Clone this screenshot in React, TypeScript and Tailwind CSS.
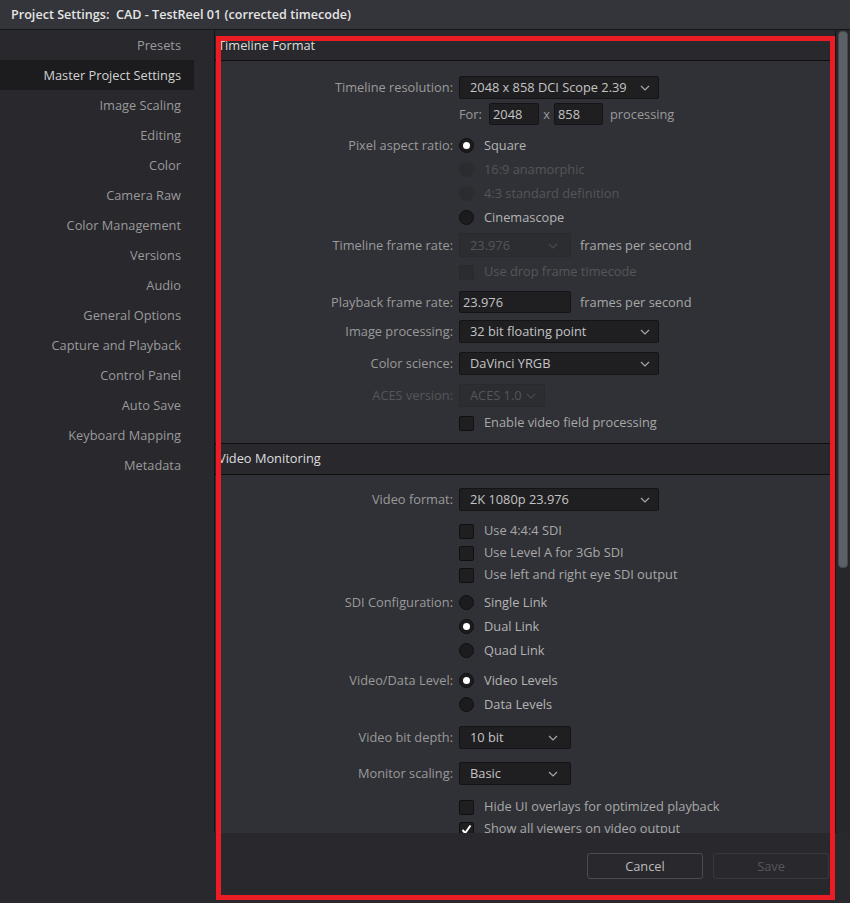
import React from 'react';

const sidebarItems = [
  'Presets',
  'Master Project Settings',
  'Image Scaling',
  'Editing',
  'Color',
  'Camera Raw',
  'Color Management',
  'Versions',
  'Audio',
  'General Options',
  'Capture and Playback',
  'Control Panel',
  'Auto Save',
  'Keyboard Mapping',
  'Metadata',
];

const Chevron: React.FC<{ dim?: boolean }> = ({ dim }) => (
  <svg width="10" height="6" viewBox="0 0 10 6" fill="none" className="shrink-0">
    <path d="M1 1L5 5L9 1" stroke={dim ? '#4a4a4e' : '#a8a8a8'} strokeWidth="1.2" />
  </svg>
);

const Row: React.FC<{ label?: string; dim?: boolean; className?: string; children?: React.ReactNode }> = ({
  label,
  dim,
  className = '',
  children,
}) => (
  <div className={`flex items-center ${className}`}>
    <div className={`w-[244px] shrink-0 pr-[6px] pt-[1px] text-right ${dim ? 'text-[#55555a]' : 'text-[#9a9a9a]'}`}>
      {label ? `${label}:` : ''}
    </div>
    <div className="flex items-center h-full">{children}</div>
  </div>
);

const Dropdown: React.FC<{ value: string; width: string; dim?: boolean; pad?: string }> = ({
  value,
  width,
  dim,
  pad = 'pl-[10px] pr-[8px]',
}) => (
  <div
    className={`${width} h-full flex items-center justify-between gap-[4px] whitespace-nowrap rounded-[2px] border pt-[1px] ${
      dim ? 'border-[#2a2a2e] bg-[#2c2d31] text-[#55555a]' : 'border-[#141416] bg-[#1f1f22] text-[#c4c4c4]'
    } ${pad}`}
  >
    <span>{value}</span>
    <Chevron dim={dim} />
  </div>
);

const Radio: React.FC<{ checked?: boolean; dim?: boolean; label: string }> = ({ checked, dim, label }) => (
  <div className="flex items-center gap-[10px]">
    <div
      className={`w-[15px] h-[15px] rounded-full border flex items-center justify-center ${
        dim ? 'bg-[#2b2c30] border-[#2b2c30]' : 'bg-[#1c1c1e] border-[#101011]'
      }`}
    >
      {checked && <div className="w-[7px] h-[7px] rounded-full bg-white" />}
    </div>
    <span className={`pt-[1px] ${dim ? 'text-[#55555a]' : 'text-[#b4b4b4]'}`}>{label}</span>
  </div>
);

const Check: React.FC<{ checked?: boolean; dim?: boolean; label: string }> = ({ checked, dim, label }) => (
  <div className="flex items-center gap-[10px]">
    <div
      className={`w-[15px] h-[15px] rounded-[2px] border flex items-center justify-center ${
        dim ? 'bg-[#2b2c30] border-[#2a2a2e]' : 'bg-[#1f1f22] border-[#101011]'
      }`}
    >
      {checked && (
        <svg width="11" height="11" viewBox="0 0 11 11" fill="none">
          <path d="M1.5 6L4.2 9L9.5 1.5" stroke="#ffffff" strokeWidth="2" />
        </svg>
      )}
    </div>
    <span className={dim ? 'text-[#55555a]' : 'text-[#a8a8a8]'}>{label}</span>
  </div>
);

const SectionHeader: React.FC<{ title: string; className?: string }> = ({ title, className = '' }) => (
  <div className={`flex items-center pl-[3px] bg-[#28282d] border-[#0f0f10] text-[#dedede] ${className}`}>
    {title}
  </div>
);

const Field: React.FC<{ value: string; width: string }> = ({ value, width }) => (
  <div
    className={`${width} h-full flex items-center pl-[3px] pt-[2px] rounded-[2px] border border-[#141416] bg-[#1f1f22] text-[#c4c4c4]`}
  >
    {value}
  </div>
);

export default function App() {
  return (
    <div
      className="relative w-[850px] h-[903px] flex flex-col bg-[#28282d] text-[12.8px] overflow-hidden"
      style={{ fontFamily: '"Open Sans", "Noto Sans", sans-serif' }}
    >
      {/* Title bar */}
      <div className="h-[30px] shrink-0 flex items-center pl-[11px] pt-[1px] bg-[#34353a] border-b border-[#161618] text-[#e4e4e4] text-[12.6px] font-semibold">
        Project Settings:&nbsp; CAD - TestReel 01 (corrected timecode)
      </div>

      <div className="flex flex-1 min-h-0">
        {/* Sidebar */}
        <div className="w-[214px] shrink-0 bg-[#28282d]">
          {sidebarItems.map((item, i) => (
            <div
              key={item}
              className={`w-[194px] h-[30px] flex items-center justify-end pr-[13px] pt-[2px] ${
                i === 1 ? 'bg-[#1c1c1e] text-[#d2d2d2]' : 'text-[#9a9a9a]'
              }`}
            >
              {item}
            </div>
          ))}
        </div>

        {/* Main */}
        <div className="flex-1 flex flex-col min-w-0">
          <div className="flex flex-1 min-h-0">
            <div className="w-[621px] shrink-0 overflow-hidden bg-[#303136] border-l border-[#141416]">
              <SectionHeader title="Timeline Format" className="h-[31px] pt-[2px] border-b" />
              <div className="flex flex-col pb-[9px]">
                <Row label="Timeline resolution" className="h-[23px] mt-[15px]">
                  <Dropdown value="2048 x 858 DCI Scope 2.39" width="w-[200px]" />
                </Row>
                <Row className="h-[22px] mt-[4px]">
                  <span className="text-[#9a9a9a] w-[30px] pt-[2px]">For:</span>
                  <Field value="2048" width="w-[50px]" />
                  <span className="text-[#9a9a9a] w-[15px] text-center pt-[2px]">x</span>
                  <Field value="858" width="w-[49px]" />
                  <span className="text-[#9a9a9a] ml-[7px] pt-[2px]">processing</span>
                </Row>
                <Row label="Pixel aspect ratio" className="h-[24px] mt-[8px]">
                  <Radio checked label="Square" />
                </Row>
                <Row className="h-[24px]">
                  <Radio dim label="16:9 anamorphic" />
                </Row>
                <Row className="h-[24px]">
                  <Radio dim label="4:3 standard definition" />
                </Row>
                <Row className="h-[24px]">
                  <Radio label="Cinemascope" />
                </Row>
                <Row label="Timeline frame rate" className="h-[24px] mt-[4px]">
                  <Dropdown value="23.976" width="w-[112px]" dim pad="pl-[10px] pr-[12px]" />
                  <span className="ml-[9px] pt-[1px] text-[#a8a8a8]">frames per second</span>
                </Row>
                <Row className="h-[22px] mt-[4px]">
                  <Check dim label="Use drop frame timecode" />
                </Row>
                <Row label="Playback frame rate" className="h-[22px] mt-[8px]">
                  <Field value="23.976" width="w-[112px]" />
                  <span className="ml-[9px] pt-[1px] text-[#a8a8a8]">frames per second</span>
                </Row>
                <Row label="Image processing" className="h-[23px] mt-[7px]">
                  <Dropdown value="32 bit floating point" width="w-[200px]" />
                </Row>
                <Row label="Color science" className="h-[23px] mt-[9px]">
                  <Dropdown value="DaVinci YRGB" width="w-[200px]" />
                </Row>
                <Row label="ACES version" dim className="h-[23px] mt-[9px]">
                  <Dropdown value="ACES 1.0" width="w-[86px]" dim pad="pl-[10px] pr-[12px]" />
                </Row>
                <Row className="h-[22px] mt-[5px]">
                  <Check label="Enable video field processing" />
                </Row>
              </div>

              <SectionHeader title="Video Monitoring" className="h-[32px] border-y" />
              <div className="flex flex-col">
                <Row label="Video format" className="h-[23px] mt-[13px]">
                  <Dropdown value="2K 1080p 23.976" width="w-[200px]" />
                </Row>
                <Row className="h-[22px] mt-[9px]">
                  <Check label="Use 4:4:4 SDI" />
                </Row>
                <Row className="h-[22px]">
                  <Check label="Use Level A for 3Gb SDI" />
                </Row>
                <Row className="h-[22px]">
                  <Check label="Use left and right eye SDI output" />
                </Row>
                <Row label="SDI Configuration" className="h-[24px] mt-[4px]">
                  <Radio label="Single Link" />
                </Row>
                <Row className="h-[24px]">
                  <Radio checked label="Dual Link" />
                </Row>
                <Row className="h-[24px]">
                  <Radio label="Quad Link" />
                </Row>
                <Row label="Video/Data Level" className="h-[24px] mt-[6px]">
                  <Radio checked label="Video Levels" />
                </Row>
                <Row className="h-[24px]">
                  <Radio label="Data Levels" />
                </Row>
                <Row label="Video bit depth" className="h-[23px] mt-[10px]">
                  <Dropdown value="10 bit" width="w-[112px]" pad="pl-[10px] pr-[12px]" />
                </Row>
                <Row label="Monitor scaling" className="h-[23px] mt-[13px]">
                  <Dropdown value="Basic" width="w-[112px]" pad="pl-[10px] pr-[12px]" />
                </Row>
                <Row className="h-[22px] mt-[11px]">
                  <Check label="Hide UI overlays for optimized playback" />
                </Row>
                <Row className="h-[22px]">
                  <Check checked label="Show all viewers on video output" />
                </Row>
              </div>
            </div>

            {/* Scrollbar */}
            <div className="flex-1 bg-[#27272b] border-l border-[#141416] pl-[2px] pt-[1px]">
              <div className="w-[10px] h-[537px] rounded-[4px] bg-[#5c6067] border border-[#45484e]" />
            </div>
          </div>

          {/* Footer */}
          <div className="h-[70px] shrink-0 bg-[#28282d] flex justify-end gap-[10px] pt-[20px] pr-[21px]">
            <div className="w-[116px] h-[26px] pt-[2px] rounded-[3px] border border-[#4a4a50] flex items-center justify-center text-[#bcbcbc]">
              Cancel
            </div>
            <div className="w-[116px] h-[26px] pt-[2px] rounded-[3px] border border-[#37373c] flex items-center justify-center text-[#56565b]">
              Save
            </div>
          </div>
        </div>
      </div>

      {/* Red annotation frame */}
      <div className="absolute left-[216px] top-[36px] w-[619px] h-[864px] border-[5px] border-[#ec1c24] pointer-events-none" />
    </div>
  );
}
